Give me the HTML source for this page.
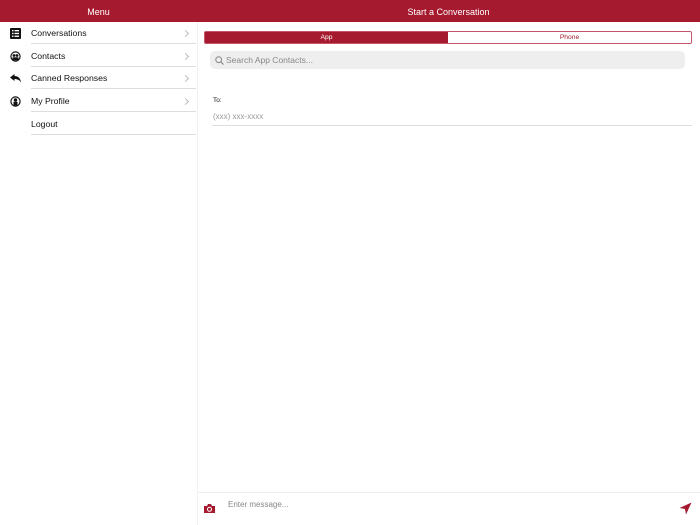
<!DOCTYPE html>
<html><head><meta charset="utf-8"><style>
*{margin:0;padding:0;box-sizing:border-box}
body{width:700px;height:525px;overflow:hidden;font-family:"Liberation Sans",sans-serif;background:#fff;position:relative}
.hdr{position:absolute;top:0;height:22px;background:#a51a2f;color:#fff;font-size:9px;text-align:center;line-height:24px}
.row{position:absolute;left:0;width:197px;height:22px}
.row .t{position:absolute;left:31px;top:0;line-height:23px;font-size:8.7px;color:#111}
.row .ln{position:absolute;left:31px;right:1px;bottom:0;height:1px;background:#ddd}
.row .ch{position:absolute;right:9px;top:9px;width:5px;height:5px;border-top:1px solid #bbb;border-right:1px solid #bbb;transform:rotate(45deg)}
.ic{position:absolute;left:10px;top:6px;width:11px;height:11px}
</style></head><body>
<div class="hdr" style="left:0;width:197px">Menu</div>
<div class="hdr" style="left:197px;width:503px">Start a Conversation</div>
<div style="position:absolute;left:197px;top:22px;width:1px;height:503px;background:#f2f2f2"></div>

<div class="row" style="top:22px"><svg class="ic" viewBox="0 0 11 11"><rect width="11" height="11" rx="1" fill="#111"/><g fill="#fff"><rect x="2" y="2" width="1.5" height="1.3"/><rect x="4.5" y="2" width="4.5" height="1.3"/><rect x="2" y="4.8" width="1.5" height="1.3"/><rect x="4.5" y="4.8" width="4.5" height="1.3"/><rect x="2" y="7.6" width="1.5" height="1.3"/><rect x="4.5" y="7.6" width="4.5" height="1.3"/></g></svg><span class="t">Conversations</span><i class="ch"></i><i class="ln"></i></div>
<div class="row" style="top:45px"><svg class="ic" viewBox="0 0 11 11"><circle cx="5.5" cy="5.5" r="5.2" fill="#111"/><circle cx="5.5" cy="5.5" r="4" fill="#fff"/><circle cx="4" cy="4.5" r="1.4" fill="#111"/><circle cx="7" cy="4.5" r="1.4" fill="#111"/><rect x="2.5" y="6.3" width="6" height="3" fill="#111"/></svg><span class="t">Contacts</span><i class="ch"></i><i class="ln"></i></div>
<div class="row" style="top:67px"><svg class="ic" viewBox="0 0 11 11"><path d="M0 4.5L4.5 1V3C8 3 10.5 5 11 9.5C9.5 7 7.5 6 4.5 6V8Z" fill="#111"/></svg><span class="t">Canned Responses</span><i class="ch"></i><i class="ln"></i></div>
<div class="row" style="top:90px"><svg class="ic" viewBox="0 0 11 11"><circle cx="5.5" cy="5.5" r="5.2" fill="#111"/><circle cx="5.5" cy="5.5" r="4" fill="#fff"/><circle cx="5.5" cy="4" r="1.7" fill="#111"/><rect x="3.5" y="5.8" width="4" height="3.6" fill="#111"/></svg><span class="t">My Profile</span><i class="ch"></i><i class="ln"></i></div>
<div class="row" style="top:113px"><span class="t">Logout</span><i class="ln"></i></div>

<div style="position:absolute;left:204px;top:31px;width:488px;height:13px;border:1px solid #c4566a;border-radius:2px;display:flex;font-size:6.7px;line-height:12px;text-align:center">
<div style="flex:1;background:#a51a2f;color:#fff">App</div><div style="flex:1;color:#a51a2f">Phone</div></div>
<div style="position:absolute;left:210px;top:51px;width:475px;height:18px;background:#eeeeef;border-radius:5px;font-size:8.5px;color:#888;line-height:18px;padding-left:16px">
<svg style="position:absolute;left:5px;top:5px" width="9" height="9" viewBox="0 0 9 9"><circle cx="3.7" cy="3.7" r="2.9" fill="none" stroke="#888" stroke-width="1"/><path d="M5.8 5.8L8.5 8.5" stroke="#888" stroke-width="1.1"/></svg>Search App Contacts...</div>
<div style="position:absolute;left:213px;top:97px;font-size:6.5px;color:#111">To:</div>
<div style="position:absolute;left:213px;top:112px;font-size:8px;color:#999">(xxx) xxx-xxxx</div>
<div style="position:absolute;left:212px;top:125px;width:480px;height:1px;background:#ddd"></div>

<div style="position:absolute;left:198px;top:492px;width:502px;height:1px;background:#eee"></div>
<svg style="position:absolute;left:203px;top:503px" width="13" height="11" viewBox="0 0 13 11"><path d="M1 3h3l1-2h3l1 2h3v7H1z" fill="#a51a2f"/><circle cx="6.5" cy="6.3" r="2" fill="none" stroke="#fff" stroke-width="1"/></svg>
<div style="position:absolute;left:228px;top:500px;font-size:8px;color:#888">Enter message...</div>
<svg style="position:absolute;left:679px;top:502px" width="13" height="13" viewBox="0 0 13 13"><path d="M0.5 6L12.5 0.5L7 12.5L6 7Z" fill="#a51a2f"/></svg>
</body></html>
